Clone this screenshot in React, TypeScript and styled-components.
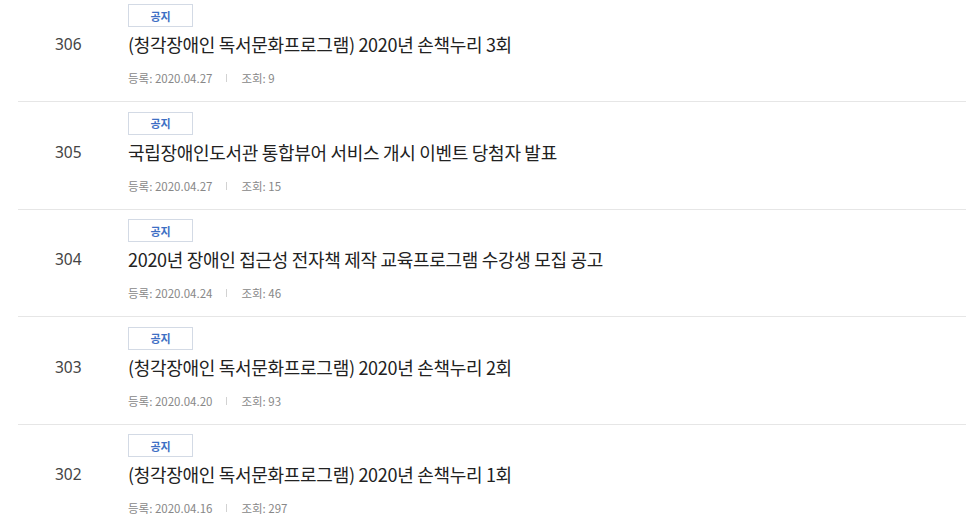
import React from "react";
import styled, { createGlobalStyle } from "styled-components";

const GlobalStyle = createGlobalStyle`
  html, body { margin: 0; padding: 0; background: #fff; }
  body {
    font-family: "Noto Sans", "Noto Sans CJK KR", sans-serif;
    color: #222;
    overflow: hidden;
  }
`;

const List = styled.ul`
  list-style: none;
  margin: -5.5px 0 0 18px;
  padding: 0;
`;

const Row = styled.li`
  display: grid;
  grid-template-columns: 110px 1fr;
  grid-template-rows: auto auto auto;
  padding: 9.5px 0 15px;
  border-bottom: 1px solid #e6e6e6;
`;

const Badge = styled.span`
  grid-column: 2;
  grid-row: 1;
  justify-self: start;
  box-sizing: border-box;
  width: 65px;
  height: 23px;
  display: flex;
  align-items: center;
  justify-content: center;
  border: 1px solid #d3dae5;
  color: #3d6fc4;
  font-family: "Noto Sans CJK KR", sans-serif;
  font-size: 11px;
  font-weight: 700;
`;

const Num = styled.span`
  grid-column: 1;
  grid-row: 2;
  padding-left: 37px;
  font-size: 15.5px;
  line-height: 24px;
  color: #444;
  margin-top: 5px;
`;

const Title = styled.a`
  grid-column: 2;
  grid-row: 2;
  margin-top: 5px;
  font-family: "Noto Sans CJK KR", sans-serif;
  font-size: 18px;
  line-height: 24px;
  color: #222;
  text-decoration: none;
  letter-spacing: -0.3px;
`;

const Meta = styled.div`
  grid-column: 2;
  grid-row: 3;
  margin-top: 14px;
  display: flex;
  align-items: center;
  gap: 14px;
  font-family: "Noto Sans CJK KR", sans-serif;
  font-size: 11.5px;
  line-height: 16px;
  color: #888;
`;

const Sep = styled.span`
  width: 1px;
  height: 8px;
  background: #d2d2d2;
`;

const items = [
  { no: 306, title: "(청각장애인 독서문화프로그램) 2020년 손책누리 3회", date: "2020.04.27", views: 9 },
  { no: 305, title: "국립장애인도서관 통합뷰어 서비스 개시 이벤트 당첨자 발표", date: "2020.04.27", views: 15 },
  { no: 304, title: "2020년 장애인 접근성 전자책 제작 교육프로그램 수강생 모집 공고", date: "2020.04.24", views: 46 },
  { no: 303, title: "(청각장애인 독서문화프로그램) 2020년 손책누리 2회", date: "2020.04.20", views: 93 },
  { no: 302, title: "(청각장애인 독서문화프로그램) 2020년 손책누리 1회", date: "2020.04.16", views: 297 },
];

export default function App() {
  return (
    <>
      <GlobalStyle />
      <List>
        {items.map((it) => (
          <Row key={it.no}>
            <Badge>공지</Badge>
            <Num>{it.no}</Num>
            <Title href="#">{it.title}</Title>
            <Meta>
              <span>등록: {it.date}</span>
              <Sep />
              <span>조회: {it.views}</span>
            </Meta>
          </Row>
        ))}
      </List>
    </>
  );
}
